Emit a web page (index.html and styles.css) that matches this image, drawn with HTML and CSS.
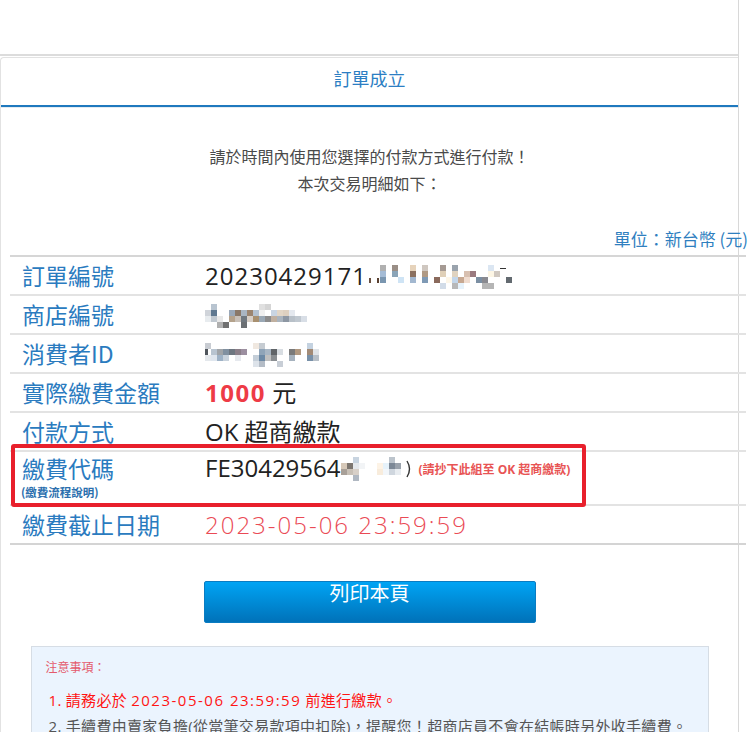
FILE: index.html
```html
<!DOCTYPE html>
<html lang="zh-Hant">
<head>
<meta charset="utf-8">
<title>訂單成立</title>
<link rel="stylesheet" href="styles.css">
</head>
<body>
<div class="page">
  <div class="topbox"></div>
  <div class="panel">
    <div class="panel-head">訂單成立</div>
    <div class="panel-body">
      <p class="intro">請於時間內使用您選擇的付款方式進行付款！<br>本次交易明細如下：</p>
      <div class="unit">單位：新台幣 (元)</div>
      <div class="table-wrap">
        <table class="detail">
          <tr>
            <td class="label">訂單編號</td>
            <td class="value"><span class="num">20230429171</span><svg class="mosaic m1" width="148" height="30" viewBox="0 0 148 30">
              <rect x="2" y="16" width="2" height="5" fill="#6a5040"/><rect x="10" y="16" width="2" height="5" fill="#5a4030"/>
              <rect x="13" y="3" width="6" height="6" fill="#b0b0b0"/><rect x="13" y="9" width="6" height="6" fill="#a5bcd6"/><rect x="13" y="15" width="6" height="6" fill="#7a96b0"/>
              <rect x="25" y="3" width="6" height="6" fill="#9a8e86"/><rect x="25" y="9" width="6" height="6" fill="#8aa4b8"/>
              <rect x="31" y="15" width="6" height="6" fill="#cfe4f5"/>
              <rect x="43" y="3" width="6" height="6" fill="#e6d3bb"/><rect x="43" y="9" width="6" height="6" fill="#8c7160"/><rect x="43" y="15" width="6" height="6" fill="#a3b8d0"/>
              <rect x="55" y="3" width="6" height="6" fill="#cfc7c0"/><rect x="55" y="9" width="6" height="6" fill="#b09a85"/><rect x="55" y="15" width="6" height="6" fill="#7f9ab5"/>
              <rect x="67" y="15" width="6" height="6" fill="#8a6a5c"/>
              <rect x="73" y="3" width="6" height="6" fill="#a59a93"/><rect x="73" y="9" width="6" height="6" fill="#e0d0b8"/><rect x="73" y="21" width="6" height="6" fill="#d2dce8"/>
              <rect x="79" y="15" width="6" height="6" fill="#fdf6e8"/>
              <rect x="85" y="3" width="6" height="6" fill="#9aa3ad"/><rect x="85" y="9" width="6" height="6" fill="#e0d3c0"/><rect x="85" y="15" width="6" height="6" fill="#c3d6ea"/><rect x="85" y="21" width="6" height="6" fill="#b8b8b8"/>
              <rect x="91" y="15" width="6" height="6" fill="#c7a891"/><rect x="91" y="21" width="6" height="6" fill="#e6f2fb"/>
              <rect x="97" y="9" width="6" height="6" fill="#d8c0b0"/><rect x="97" y="15" width="6" height="6" fill="#f0dccf"/>
              <rect x="103" y="9" width="6" height="6" fill="#9a7a80"/>
              <rect x="109" y="15" width="6" height="6" fill="#7b8fa3"/>
              <rect x="115" y="15" width="6" height="6" fill="#8a8a90"/><rect x="115" y="21" width="6" height="6" fill="#b5b5b5"/>
              <rect x="121" y="3" width="6" height="6" fill="#dbe6f2"/><rect x="121" y="9" width="6" height="6" fill="#fdf6e5"/><rect x="121" y="21" width="6" height="6" fill="#b5b5b5"/>
              <rect x="127" y="9" width="6" height="6" fill="#d0c8c0"/>
              <rect x="133" y="6" width="6" height="1" fill="#333333"/>
              <rect x="139" y="15" width="6" height="6" fill="#636a70"/>
            </svg></td>
          </tr>
          <tr>
            <td class="label">商店編號</td>
            <td class="value"><svg class="mosaic" width="110" height="28" viewBox="0 0 110 28">
              <rect x="0" y="8" width="6" height="6" fill="#d0d4da"/><rect x="0" y="14" width="6" height="6" fill="#e8ecef"/>
              <rect x="6" y="2" width="6" height="6" fill="#b8c4d0"/><rect x="6" y="8" width="6" height="6" fill="#5f7890"/><rect x="6" y="14" width="6" height="6" fill="#c0c8d0"/>
              <rect x="12" y="14" width="6" height="6" fill="#e8e8e8"/><rect x="12" y="20" width="6" height="6" fill="#b0b0b0"/>
              <rect x="18" y="20" width="6" height="6" fill="#707070"/>
              <rect x="24" y="8" width="6" height="6" fill="#9aa8b8"/><rect x="24" y="14" width="6" height="6" fill="#b4a28c"/>
              <rect x="30" y="8" width="6" height="6" fill="#8a7868"/><rect x="30" y="14" width="6" height="6" fill="#c8c0b8"/>
              <rect x="36" y="8" width="6" height="6" fill="#a9b5c2"/><rect x="36" y="14" width="6" height="6" fill="#707880"/><rect x="36" y="20" width="6" height="6" fill="#6c7074"/>
              <rect x="42" y="8" width="6" height="6" fill="#9c8570"/><rect x="42" y="14" width="6" height="6" fill="#d8cfc6"/>
              <rect x="48" y="8" width="6" height="6" fill="#b5c2d0"/><rect x="48" y="14" width="6" height="6" fill="#a89070"/>
              <rect x="54" y="2" width="6" height="6" fill="#e0e0e0"/><rect x="54" y="8" width="6" height="6" fill="#f0f0f0"/><rect x="54" y="14" width="6" height="6" fill="#9aa8b5"/>
              <rect x="60" y="2" width="6" height="6" fill="#d5d5d5"/><rect x="60" y="14" width="6" height="6" fill="#8c8c8c"/>
              <rect x="66" y="8" width="6" height="6" fill="#c9d5e2"/><rect x="66" y="14" width="6" height="6" fill="#c0b0a0"/>
              <rect x="72" y="8" width="6" height="6" fill="#e2d6c6"/><rect x="72" y="14" width="6" height="6" fill="#aab4be"/>
              <rect x="78" y="8" width="6" height="6" fill="#ddd0c0"/><rect x="78" y="14" width="6" height="6" fill="#8d97a3"/>
              <rect x="84" y="8" width="6" height="6" fill="#e4e8ee"/><rect x="84" y="14" width="6" height="6" fill="#b8c0c8"/>
              <rect x="90" y="14" width="6" height="6" fill="#c0c8d0"/>
              <rect x="96" y="14" width="6" height="6" fill="#d8dee6"/>
            </svg></td>
          </tr>
          <tr>
            <td class="label">消費者ID</td>
            <td class="value"><svg class="mosaic" width="124" height="28" viewBox="0 0 124 28">
              <rect x="0" y="2" width="6" height="6" fill="#c8ccd2"/><rect x="0" y="8" width="3" height="8" fill="#50565c"/><rect x="0" y="14" width="6" height="6" fill="#e4e8ec"/>
              <rect x="6" y="8" width="6" height="6" fill="#b8c4d0"/><rect x="6" y="14" width="6" height="6" fill="#dfe6ee"/>
              <rect x="12" y="8" width="6" height="6" fill="#a0a4a8"/><rect x="12" y="14" width="6" height="6" fill="#9eb2c6"/>
              <rect x="18" y="8" width="6" height="6" fill="#8090a0"/><rect x="18" y="14" width="6" height="6" fill="#c8d2dc"/>
              <rect x="24" y="8" width="6" height="6" fill="#6d7680"/>
              <rect x="30" y="8" width="6" height="6" fill="#8a7e88"/><rect x="30" y="14" width="6" height="6" fill="#e6e9ee"/>
              <rect x="36" y="8" width="6" height="6" fill="#9c8fa0"/>
              <rect x="48" y="2" width="6" height="6" fill="#f0e8e0"/><rect x="48" y="14" width="6" height="6" fill="#c4ced8"/><rect x="48" y="20" width="6" height="6" fill="#dde3ea"/>
              <rect x="54" y="2" width="6" height="6" fill="#c6ccd2"/><rect x="54" y="8" width="6" height="6" fill="#8fa4b8"/><rect x="54" y="14" width="6" height="6" fill="#6d8aa6"/><rect x="54" y="20" width="6" height="6" fill="#b4bcc6"/>
              <rect x="60" y="8" width="6" height="6" fill="#a8b6c4"/><rect x="60" y="14" width="6" height="6" fill="#c0c0c0"/>
              <rect x="66" y="8" width="6" height="6" fill="#606468"/><rect x="66" y="14" width="6" height="6" fill="#8a8e92"/>
              <rect x="72" y="8" width="6" height="6" fill="#d8dde2"/><rect x="72" y="20" width="6" height="6" fill="#c8ced6"/>
              <rect x="84" y="8" width="6" height="6" fill="#7a7a7a"/><rect x="84" y="14" width="6" height="6" fill="#a6b2be"/>
              <rect x="90" y="8" width="6" height="6" fill="#b09880"/>
              <rect x="102" y="2" width="6" height="6" fill="#c4d2e0"/><rect x="102" y="8" width="6" height="6" fill="#a28a76"/><rect x="102" y="14" width="6" height="6" fill="#7890a8"/>
              <rect x="108" y="8" width="6" height="6" fill="#e0e4e8"/><rect x="108" y="14" width="6" height="6" fill="#b8c0c8"/>
            </svg></td>
          </tr>
          <tr>
            <td class="label">實際繳費金額</td>
            <td class="value"><span class="amount">1000</span> 元</td>
          </tr>
          <tr>
            <td class="label">付款方式</td>
            <td class="value">OK 超商繳款</td>
          </tr>
          <tr class="code-row">
            <td class="label">繳費代碼<div class="sub">(繳費流程說明)</div></td>
            <td class="value"><span class="code">FE30429564</span><svg class="mosaic" width="72" height="28" viewBox="0 0 72 28">
              <rect x="0" y="8" width="6" height="6" fill="#d6c8b8"/><rect x="0" y="14" width="6" height="6" fill="#a8a098"/>
              <rect x="6" y="8" width="6" height="6" fill="#7c7670"/><rect x="6" y="14" width="6" height="6" fill="#c8c0b6"/>
              <rect x="12" y="2" width="6" height="6" fill="#c8d4e0"/><rect x="12" y="8" width="6" height="6" fill="#e4e8ec"/><rect x="12" y="14" width="6" height="6" fill="#d8d0c8"/><rect x="12" y="20" width="6" height="6" fill="#b0b8c2"/>
              <rect x="18" y="8" width="6" height="6" fill="#f2f4f6"/>
              <rect x="36" y="8" width="6" height="6" fill="#fdf3e6"/><rect x="36" y="14" width="6" height="6" fill="#f8ecdc"/>
              <rect x="42" y="8" width="6" height="6" fill="#e6f2fa"/><rect x="42" y="14" width="6" height="6" fill="#f2f6fa"/>
              <rect x="48" y="2" width="6" height="6" fill="#bcc4cc"/><rect x="48" y="8" width="6" height="6" fill="#7c8896"/><rect x="48" y="14" width="6" height="6" fill="#cfd6de"/>
              <rect x="54" y="8" width="6" height="6" fill="#9aa2ac"/><rect x="54" y="14" width="6" height="6" fill="#e8ecf0"/>
              <path d="M66 6 Q71 14 66 22" stroke="#333" stroke-width="1.4" fill="none"/>
            </svg><span class="copy-note">(請抄下此組至 OK 超商繳款)</span></td>
          </tr>
          <tr class="last">
            <td class="label">繳費截止日期</td>
            <td class="value"><span class="deadline">2023-05-06 23:59:59</span></td>
          </tr>
        </table>
        <div class="highlight"></div>
      </div>
      <div class="actions"><button class="print" type="button">列印本頁</button></div>
      <div class="notice">
        <div class="notice-title">注意事項：</div>
        <ol class="notice-list">
          <li class="warn">1. 請務必於 <span class="date">2023-05-06 23:59:59</span> 前進行繳款。</li>
          <li>2. 手續費由賣家負擔(從當筆交易款項中扣除)，提醒您！超商店員不會在結帳時另外收手續費。</li>
        </ol>
      </div>
    </div>
  </div>
</div>
</body>
</html>
```

FILE: styles.css
```css
html, body {
  margin: 0;
  padding: 0;
  background: #ffffff;
}

body {
  font-family: "Open Sans", "Noto Sans CJK TC", sans-serif;
  color: #222222;
  overflow: hidden;
}

.page {
  width: 738px;
  min-height: 732px;
  border-right: 1px solid #d8d8d8;
}

.topbox {
  height: 54px;
  border-bottom: 2px solid #dcdcdc;
}

.panel {
  margin-top: 1px;
  border-top: 1px solid #e2e2e2;
  border-left: 1px solid #e2e2e2;
  border-radius: 4px 0 0 0;
}

.panel-head {
  padding: 7px 0 14px;
  line-height: 26px;
  font-size: 18px;
  text-align: center;
  color: #2c7ec3;
  font-family: "Noto Sans CJK TC", sans-serif;
  border-bottom: 2px solid #1f79be;
}

.panel-body {
  border-top: 1px solid #e4ecf2;
  padding-top: 35px;
}

.intro {
  margin: 0;
  text-align: center;
  font-size: 16px;
  line-height: 27px;
  color: #4a4a4a;
  font-family: "Noto Sans CJK TC", sans-serif;
}

.unit {
  margin: 30px -10px 0 0;
  text-align: right;
  font-size: 17px;
  line-height: 24px;
  color: #2f7fbf;
  font-family: "Noto Sans CJK TC", sans-serif;
}

.table-wrap {
  position: relative;
  margin: 4px 0 0 9px;
  width: 736px;
}

.detail {
  width: 100%;
  border-collapse: collapse;
  border-top: 2px solid #d6d6d6;
}

.detail tr {
  border-bottom: 2px solid #e3e3e3;
}

.detail tr.last {
  border-bottom: 2px solid #d4d4d4;
}

.detail td {
  padding: 0 0 0 12px;
  height: 37px;
  line-height: 37px;
  vertical-align: middle;
  white-space: nowrap;
}

.detail td.label {
  width: 171px;
  font-size: 23px;
  color: #2a7bbf;
  font-family: "Noto Sans CJK TC", sans-serif;
}

.detail td.value {
  font-size: 24px;
  color: #222222;
}

.num {
  letter-spacing: 1px;
}

.code {
  letter-spacing: 0;
}

.mosaic {
  display: inline-block;
  vertical-align: middle;
  margin-top: -4px;
}

.amount {
  color: #ee3b46;
  font-weight: 700;
  letter-spacing: 1.5px;
}

.detail .code-row td {
  height: 51px;
  vertical-align: top;
  line-height: 30px;
  padding-top: 1px;
}

.sub {
  margin-top: 2px;
  font-size: 11.5px;
  line-height: 14px;
  font-weight: 700;
  color: #2b6fae;
  margin-left: -1px;
}

.copy-note {
  margin-left: 6px;
  font-size: 12px;
  font-weight: 700;
  color: #e85454;
  vertical-align: 3px;
}

.deadline {
  color: #ea4a55;
  font-weight: 300;
  letter-spacing: 2px;
}

.highlight {
  position: absolute;
  left: 1px;
  top: 189px;
  width: 575px;
  height: 63px;
  box-sizing: border-box;
  border: 4px solid #e8202c;
  border-radius: 3px;
  pointer-events: none;
}

.actions {
  margin-top: 36px;
  text-align: center;
}

.print {
  width: 332px;
  height: 42px;
  padding: 0;
  margin: 0;
  border: 1px solid #0a7cc2;
  border-radius: 2px;
  background: linear-gradient(#00a4f4, #0072b9);
  color: #ffffff;
  font-size: 20px;
  line-height: 22px;
  vertical-align: top;
  font-family: "Noto Sans CJK TC", sans-serif;
  display: inline-flex;
  justify-content: center;
  align-items: flex-start;
}

.notice {
  width: 678px;
  box-sizing: border-box;
  margin: 23px auto 0;
  padding: 11px 14px 10px;
  background: #ebf4fe;
  border: 1px solid #d6dde5;
}

.notice-title {
  font-size: 12px;
  line-height: 18px;
  color: #e45a6c;
  font-family: "Noto Sans CJK TC", sans-serif;
}

.notice-list {
  list-style: none;
  margin: 11px 0 0 3px;
  padding: 0;
  font-size: 15px;
  line-height: 26px;
  color: #555555;
  letter-spacing: 0.3px;
}

.notice-list li {
  white-space: nowrap;
}

.notice-list .warn {
  color: #ff1414;
}

.notice-list .date {
  letter-spacing: 1.5px;
}
```
